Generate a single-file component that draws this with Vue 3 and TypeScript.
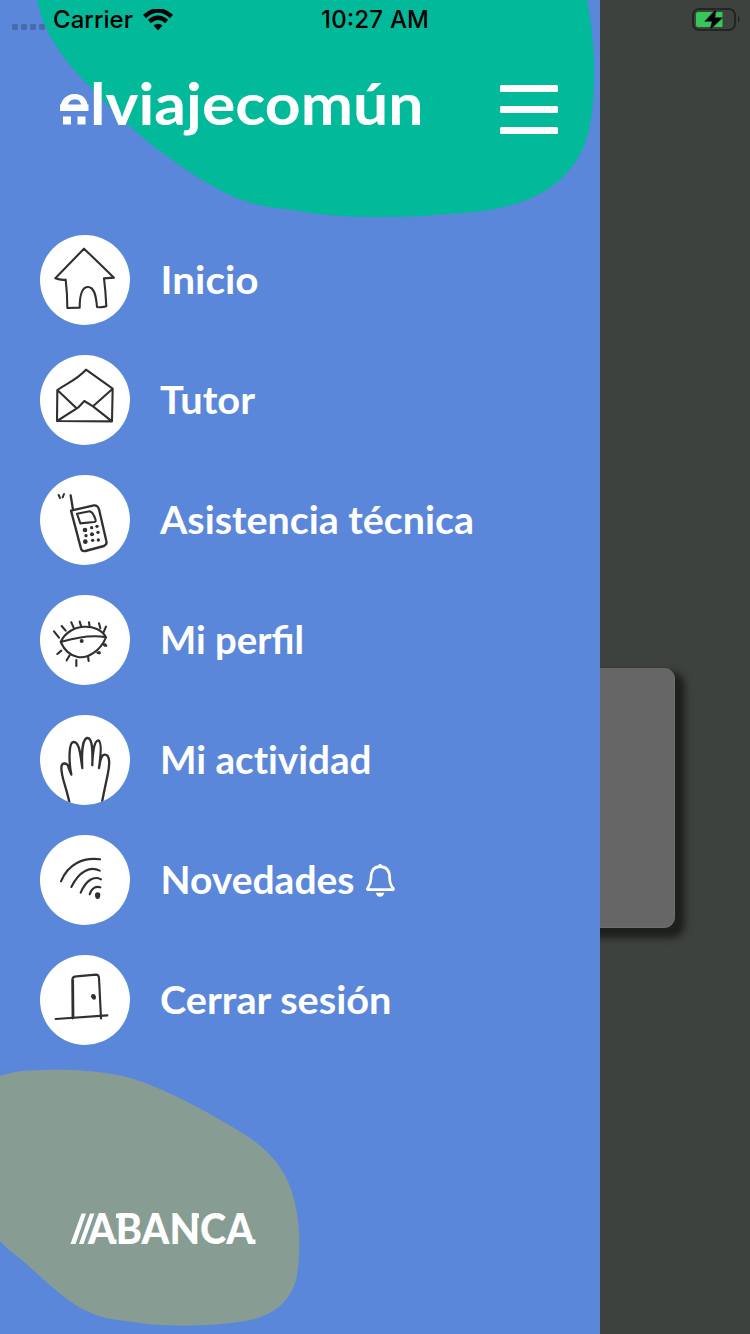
<script setup lang="ts">
interface Shape {
  d: string
  w?: number
}
interface MenuItem {
  label: string
  x: number
  width: number
  bell?: boolean
  plain?: boolean
  strokes: Shape[]
  dots?: [number, number, number][]
}

const items: MenuItem[] = [
  {
    label: 'Inicio', x: -0.5, width: 98,
    strokes: [{ d: 'M162 71L76 160Q92 166 107 164Q112 205 112 249L149 248C149 207 157 186 174 186C192 186 198 210 201 246Q218 248 229 244Q227 200 222 160L252 158Q210 117 162 71Z' }],
  },
  {
    label: 'Tutor', x: -1, width: 95,
    strokes: [{ d: 'M82 135L81 228L246 229L248 131L168 74C140 104 116 112 82 135L138 188M248 131L189 184M81 228L144 188L163 168L189 184L246 229' }],
  },
  {
    label: 'Asistencia técnica', x: -1, width: 314,
    strokes: [
      { d: 'M122 91L129 134M123 137L192 121Q203 120 207 133L229 228Q232 238 222 243L166 258Q156 260 153 251Z', w: 7 },
      { d: 'M141 146L179 139Q189 140 197 165Q198 170 192 171L151 175Z' },
      { d: 'M86 90L90 99M102 87L98 97', w: 6 },
    ],
    dots: [[165, 195, 7], [185, 188, 5], [201, 184, 5], [168, 212, 5], [186, 208, 6], [204, 202, 5], [166, 230, 7], [188, 226, 5], [205, 225, 5]],
  },
  {
    label: 'Mi perfil', x: -1, width: 144,
    strokes: [
      { d: 'M92 171C118 113 205 112 228 157C211 197 174 222 143 216C121 212 103 195 92 171C130 160 184 148 228 157' },
      { d: 'M72 139L87 158M95 123L107 137M124 112L132 130M149 110L154 126M177 112L179 126M207 115L211 130M228 125L221 141M82 207L94 197M110 226L119 211M139 243L139 225M176 228L174 214M202 203L209 205M219 178L229 182' },
    ],
    dots: [[155, 168, 6], [207, 203, 5], [225, 180, 5]],
  },
  {
    label: 'Mi actividad', x: -1, width: 211.5, plain: true,
    strokes: [{ d: 'M118 292C109 246 94 218 94 189C94 168 114 174 116 189L124 209C116 170 116 113 130 111C149 109 151 151 157 189C155 157 155 102 172 99C188 97 188 143 187 181C187 154 191 106 205 106C216 110 212 154 207 189C211 168 211 151 223 149C242 148 239 181 233 209C227 238 221 264 216 292', w: 7 }],
  },
  {
    label: 'Novedades', x: -0.5, width: 194, bell: true,
    strokes: [{ d: 'M93 169C114 117 160 96 210 103M124 186C148 137 182 123 209 137M152 203C169 164 192 152 213 163M179 208C185 188 198 183 211 187' }],
    dots: [[203, 210, 8], [203, 215, 7]],
  },
  {
    label: 'Cerrar sesión', x: -1, width: 231.5,
    strokes: [
      { d: 'M128 220L127 105Q127 94 139 94L198 89Q206 89 207 99L213 220', w: 6.5 },
      { d: 'M77 222L232 211' },
      { d: 'M129 106L130 216' },
    ],
    dots: [[190, 154, 7], [192, 158, 6]],
  },
]
</script>

<template>
  <div class="screen">
    <aside class="drawer">
      <svg class="blob blob-top" viewBox="0 0 600 220">
        <path d="M37 0C42 25 54 47 75 71C106 105 133 131 165 155C205 183 233 202 274 208Q297 210 310 213C364 220 419 217 474 212C536 206 575 180 588 134C597 98 596 45 587 0Z" />
      </svg>
      <svg class="blob blob-bottom" viewBox="0 1068 302 260">
        <path d="M0 1076Q16 1070 45 1070C89 1069 115 1074 134 1079C168 1090 216 1116 247 1136C280 1158 290 1181 295 1203C301 1230 300 1254 297 1276C291 1303 272 1316 246 1321C209 1327 165 1327 132 1322L111 1319C71 1312 47 1280 18 1257Q8 1250 0 1241Z" />
      </svg>

      <header class="header">
        <svg class="logo" viewBox="56 76 372 64">
          <defs>
            <clipPath id="e-top"><rect x="56" y="90" width="36" height="16" /></clipPath>
          </defs>
          <text x="58.5" y="124.5" font-size="59" clip-path="url(#e-top)" textLength="31" lengthAdjust="spacingAndGlyphs">e</text>
          <path d="M60 104.5H88.500V111H60ZM63 116.5H71V124.5H63ZM77.5 116.5H85.5V124.5H77.5Z" />
          <text x="90" y="125" font-size="57" textLength="333.5" lengthAdjust="spacingAndGlyphs">lviajecomún</text>
        </svg>
        <button class="burger" aria-label="Menú"><i /><i /><i /></button>
      </header>

      <nav class="menu">
        <a v-for="item in items" :key="item.label" class="item">
          <span class="disc">
            <svg viewBox="30 30 270 270">
              <path v-for="(s, i) in item.strokes" :key="i" :d="s.d" :stroke-width="s.w ?? 6.3" />
              <circle v-for="(c, i) in item.dots ?? []" :key="'c' + i" :cx="c[0]" :cy="c[1]" :r="c[2]" />
            </svg>
          </span>
          <svg class="label" :class="{ plain: item.plain }" :width="item.width" height="50">
            <text :x="item.x" y="38.5" :textLength="item.width" lengthAdjust="spacingAndGlyphs">{{ item.label }}</text>
          </svg>
          <svg v-if="item.bell" class="bell" viewBox="1005 115 93 105">
            <path class="line" d="M1050 126C1030 126 1023 142 1023 160C1023 178 1018 183 1012 192Q1012 195 1016 195H1087Q1092 195 1090 191C1082 183 1079 175 1079 160C1079 140 1070 126 1050 126Z" />
            <path class="fill" d="M1045 127V121Q1050 115 1056 121V127ZM1038 204H1063Q1060 216 1050 216T1038 204Z" />
          </svg>
        </a>
      </nav>

      <footer class="sponsor">
        <svg viewBox="68 1206 192 44">
          <path d="M70.500 1244L81.500 1213.500H86L75.500 1244ZM79 1244L90 1213.500H94.500L83.500 1244Z" />
          <text x="88" y="1244" font-size="42" textLength="166" lengthAdjust="spacingAndGlyphs">ABANCA</text>
          <path d="M113 1239.500H116.500V1244H113ZM116 1213.500H121V1218H116ZM194 1213.500H199V1218H194ZM250 1239.500H255.500V1244H250Z" />
        </svg>
      </footer>
    </aside>

    <main class="backdrop"><div class="card" /></main>

    <div class="status">
      <div class="carrier">
        <span class="signal"><i v-for="n in 4" :key="n" /></span>
        <svg class="carrier-name" width="80" height="30"><text x="0" y="22" textLength="80">Carrier</text></svg>
        <svg class="wifi" viewBox="0 0 30 22">
          <path d="M1.500 7.500Q15 -4.500 28.500 7.500M6.300 12.500Q15 5 23.700 12.500" />
          <path class="solid" d="M10.500 16.500Q15 12.800 19.500 16.500L15 21.500Z" />
        </svg>
      </div>
      <svg class="clock" width="108" height="30"><text x="0" y="22" textLength="108">10:27 AM</text></svg>
      <svg class="battery" viewBox="0 0 48 24">
        <rect x="1" y="1" width="42" height="21" rx="6" />
        <path class="charge" d="M6 4H30.500V19H6Q4 19 4 17V6Q4 4 6 4Z" />
        <path class="nub" d="M46 8Q49 11.500 46 15Z" />
        <path class="bolt" d="M24.500 0.500L12.500 13.500H20L17.500 22.500L31 9.500H23Z" />
      </svg>
    </div>
  </div>
</template>

<style>
body { margin: 0; }
</style>

<style scoped>
.screen {
  position: relative;
  display: flex;
  width: 750px;
  height: 1334px;
  overflow: hidden;
  font-family: Lato, "Noto Sans", sans-serif;
}
.drawer {
  position: relative;
  z-index: 1;
  width: 600px;
  height: 1334px;
  background: #5a87da;
}
.blob { position: absolute; left: 0; }
.blob-top { top: 0; width: 600px; height: 220px; fill: #02ba99; }
.blob-bottom { top: 1068px; width: 302px; height: 260px; fill: #879d94; }
.header {
  position: relative;
  display: flex;
  justify-content: space-between;
  box-sizing: border-box;
  height: 235px;
  padding: 76px 42px 0 56px;
}
.logo { width: 372px; height: 64px; overflow: visible; fill: #fff; font-weight: 700; }
.burger {
  display: flex;
  flex-direction: column;
  gap: 13.5px;
  width: 58px;
  margin: 9px 0 0;
  padding: 0;
  border: 0;
  background: none;
}
.burger i { width: 58px; height: 7.300px; border-radius: 1.500px; background: #fff; }
.menu {
  position: relative;
  display: flex;
  flex-direction: column;
  gap: 30px;
  padding-left: 40px;
}
.item { display: flex; align-items: center; height: 90px; color: #fff; }
.disc {
  width: 90px;
  height: 90px;
  margin-right: 30.5px;
  overflow: hidden;
  border-radius: 50%;
  background: #fff;
}
.disc svg { display: block; width: 90px; height: 90px; }
.disc path { fill: none; stroke: #303030; stroke-linecap: round; stroke-linejoin: round; }
.disc circle { fill: #303030; }
.label { overflow: visible; fill: #fff; font-size: 37.500px; font-weight: 700; }
.label.plain { font-variant-ligatures: none; }
.bell { width: 31px; height: 35px; margin-left: 10.500px; }
.bell .line { fill: none; stroke: #fff; stroke-width: 8; }
.bell .fill { fill: #fff; }
.sponsor { position: relative; padding: 161px 0 0 68px; }
.sponsor svg { display: block; width: 192px; height: 44px; overflow: visible; fill: #fff; font-weight: 900; }
.backdrop { width: 150px; background: #3e423e; }
.card {
  width: 115px;
  height: 260px;
  margin: 668px 0 0 -40px;
  box-sizing: border-box;
  border-right: 1.500px solid #6e6e6e;
  border-bottom: 1px solid #6e6e6e;
  border-radius: 11px;
  background: #666;
  box-shadow: 7px 7px 7px 3px #1d201d;
}
.status {
  position: absolute;
  z-index: 2;
  top: 0;
  left: 0;
  display: grid;
  grid-template-columns: 321px 371px 58px;
  width: 750px;
  height: 40px;
  font-family: Inter, "Liberation Sans", sans-serif;
  font-size: 24px;
  font-weight: 500;
}
.carrier { display: flex; padding: 6px 0 0 12px; }
.signal { display: flex; gap: 3px; width: 41px; padding-top: 18px; }
.signal i { width: 6px; height: 6px; border-radius: 1.500px; background: #476bac; }
.carrier-name { margin-right: 10px; overflow: visible; }
.wifi { width: 30px; height: 22px; margin-top: 3px; fill: none; stroke: #000; stroke-width: 4.500; }
.wifi .solid { fill: #000; stroke: none; }
.clock { margin-top: 6px; overflow: visible; }
.battery { width: 48px; height: 24px; margin-top: 8px; }
.battery rect { fill: none; stroke: #232523; stroke-width: 2; }
.battery .charge { fill: #35c759; }
.battery .nub { fill: #202220; }
.battery .bolt { fill: #000; stroke: #3e423e; stroke-width: 0.600; }
</style>
